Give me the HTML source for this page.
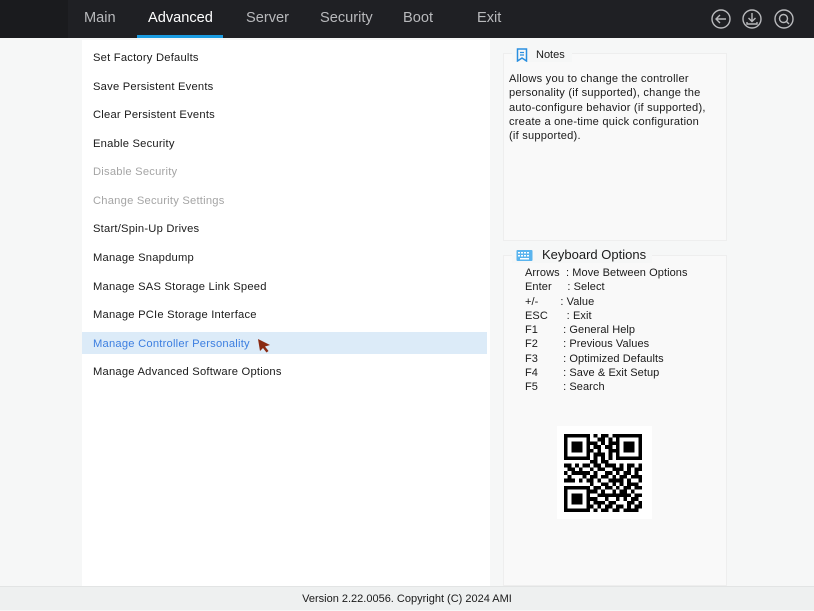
<!DOCTYPE html>
<html><head><meta charset="utf-8"><style>
*{margin:0;padding:0;box-sizing:border-box}
body{width:814px;height:610px;background:#f6f7f7;font-family:"Liberation Sans",sans-serif;position:relative;overflow:hidden;color:#1a1a1a}
.top{position:absolute;left:0;top:0;width:814px;height:38px;background:#1f2024}
.top .l{position:absolute;left:0;top:0;width:68px;height:38px;background:#1a1b1e}
.tab{position:absolute;top:10px;font-size:14.6px;color:#b8b9bc}
.tab.a{color:#fff}
.ul{position:absolute;left:137px;top:35px;width:86px;height:3px;background:#1a9be0}
.main{position:absolute;left:82px;top:40px;width:408px;height:546px;background:#fff}
.it{position:absolute;left:93px;font-size:11.2px;letter-spacing:0.22px;color:#1a1a1a}
.it.d{color:#a5a5a5}
.hl{position:absolute;left:82px;top:332px;width:405px;height:22px;background:#dcebf8}
.panel{position:absolute;left:503px;width:224px;background:#f9f9f9;border:1px solid #eeeeee}
.ph{position:absolute;font-size:11px;color:#1a1a1a}
.nt{position:absolute;left:509px;top:72px;font-size:11.1px;letter-spacing:0.22px;line-height:14.3px;color:#1a1a1a}
.kb{position:absolute;left:525px;top:266px;font-size:11px;letter-spacing:0.08px;line-height:14.3px;color:#1a1a1a}
.foot{position:absolute;left:0;top:586px;width:814px;height:24px;background:#eef0f0;border-top:1px solid #e2e4e4;font-size:11px;text-align:center;line-height:24px}
</style></head><body>
<div class="top"><div class="l"></div>
<div class="tab" style="left:84px">Main</div>
<div class="tab a" style="left:148px">Advanced</div>
<div class="tab" style="left:246px">Server</div>
<div class="tab" style="left:320px">Security</div>
<div class="tab" style="left:403px">Boot</div>
<div class="tab" style="left:477px">Exit</div>
<div class="ul"></div>
<svg style="position:absolute;left:700px;top:0" width="114" height="38" fill="none" stroke="#b8b9bc" stroke-width="1.4">
<circle cx="21" cy="19" r="9"/><path d="M26 19H16M20 15l-4 4 4 4"/>
<circle cx="52" cy="19" r="9"/><path d="M52 13v8M48.5 18l3.5 3.5 3.5-3.5M47 22v2h10v-2"/>
<circle cx="84" cy="19" r="9"/><circle cx="83.5" cy="18.5" r="4"/><path d="M86.5 21.5l2.5 2.5"/>
</svg>
</div>
<div class="main"></div>
<div class="hl"></div>
<div class="it" style="top:52px">Set Factory Defaults</div>
<div class="it" style="top:81px">Save Persistent Events</div>
<div class="it" style="top:109px">Clear Persistent Events</div>
<div class="it" style="top:138px">Enable Security</div>
<div class="it d" style="top:166px">Disable Security</div>
<div class="it d" style="top:195px">Change Security Settings</div>
<div class="it" style="top:223px">Start/Spin-Up Drives</div>
<div class="it" style="top:252px">Manage Snapdump</div>
<div class="it" style="top:281px">Manage SAS Storage Link Speed</div>
<div class="it" style="top:309px">Manage PCIe Storage Interface</div>
<div class="it" style="top:338px;color:#3d7fe0">Manage Controller Personality</div>
<div class="it" style="top:366px">Manage Advanced Software Options</div>
<svg style="position:absolute;left:256px;top:338px" width="16" height="16"><path d="M2 1L14 7 9 8.5 12.5 13 10.5 14.5 7 10 4 13z" fill="#8a2a12"/></svg>

<div class="panel" style="top:53px;height:188px"></div>
<div style="position:absolute;left:512px;top:46px;width:60px;height:16px;background:#f6f7f7"></div>
<svg style="position:absolute;left:516px;top:48px" width="12" height="14"><path d="M1.5 1h9v12l-4.5-3-4.5 3z" fill="none" stroke="#2a8fe0" stroke-width="1.5"/><path d="M4 4.5h4M4 7h4" stroke="#2a8fe0" stroke-width="1.3"/></svg>
<div class="ph" style="left:536px;top:49px">Notes</div>
<div class="nt">Allows you to change the controller<br>personality (if supported), change the<br>auto-configure behavior (if supported),<br>create a one-time quick configuration<br>(if supported).</div>

<div class="panel" style="top:255px;height:331px"></div>
<div style="position:absolute;left:512px;top:246px;width:140px;height:17px;background:#f6f7f7"></div>
<svg style="position:absolute;left:516px;top:249px" width="18" height="14"><rect x="0.5" y="1" width="16" height="11" rx="1" fill="#5ab4ee"/><g fill="#fff"><rect x="2" y="3" width="2" height="1.5"/><rect x="5" y="3" width="2" height="1.5"/><rect x="8" y="3" width="2" height="1.5"/><rect x="11" y="3" width="2" height="1.5"/><rect x="2" y="6" width="2" height="1.5"/><rect x="5" y="6" width="2" height="1.5"/><rect x="8" y="6" width="2" height="1.5"/><rect x="11" y="6" width="2" height="1.5"/><rect x="4" y="9" width="9" height="1.5"/></g></svg>
<div class="ph" style="left:542px;top:247px;font-size:13px">Keyboard Options</div>
<div class="kb">
Arrows&nbsp; : Move Between Options<br>
Enter&nbsp;&nbsp;&nbsp;&nbsp; : Select<br>
+/-&nbsp;&nbsp;&nbsp;&nbsp;&nbsp;&nbsp; : Value<br>
ESC&nbsp;&nbsp;&nbsp;&nbsp;&nbsp; : Exit<br>
F1&nbsp;&nbsp;&nbsp;&nbsp;&nbsp;&nbsp;&nbsp; : General Help<br>
F2&nbsp;&nbsp;&nbsp;&nbsp;&nbsp;&nbsp;&nbsp; : Previous Values<br>
F3&nbsp;&nbsp;&nbsp;&nbsp;&nbsp;&nbsp;&nbsp; : Optimized Defaults<br>
F4&nbsp;&nbsp;&nbsp;&nbsp;&nbsp;&nbsp;&nbsp; : Save &amp; Exit Setup<br>
F5&nbsp;&nbsp;&nbsp;&nbsp;&nbsp;&nbsp;&nbsp; : Search
</div>
<div style="position:absolute;left:557px;top:426px;width:95px;height:93px;background:#fff"></div>
<svg style="position:absolute;left:564px;top:434px" width="78" height="78" viewBox="0 0 21 21" shape-rendering="crispEdges"><path fill="#000" d="
M0 0h7v1h-7zM8 0h1v1h-1zM10 0h2v1h-2zM13 0h8v1h-8z
M0 1h1v1h-1zM6 1h1v1h-1zM9 1h2v1h-2zM12 1h1v1h-1zM14 1h1v1h-1zM20 1h1v1h-1z
M0 2h1v1h-1zM2 2h3v1h-3zM6 2h3v1h-3zM10 2h1v1h-1zM12 2h3v1h-3zM16 2h3v1h-3zM20 2h1v1h-1z
M0 3h1v1h-1zM2 3h3v1h-3zM6 3h1v1h-1zM8 3h2v1h-2zM11 3h2v1h-2zM14 3h1v1h-1zM16 3h3v1h-3zM20 3h1v1h-1z
M0 4h1v1h-1zM2 4h3v1h-3zM6 4h2v1h-2zM9 4h1v1h-1zM12 4h3v1h-3zM16 4h3v1h-3zM20 4h1v1h-1z
M0 5h1v1h-1zM6 5h1v1h-1zM8 5h3v1h-3zM12 5h1v1h-1zM14 5h1v1h-1zM20 5h1v1h-1z
M0 6h7v1h-7zM8 6h1v1h-1zM10 6h1v1h-1zM12 6h1v1h-1zM14 6h7v1h-7z
M7 7h2v1h-2zM10 7h2v1h-2z
M0 8h2v1h-2zM3 8h1v1h-1zM5 8h2v1h-2zM8 8h2v1h-2zM11 8h3v1h-3zM15 8h1v1h-1zM17 8h2v1h-2zM20 8h1v1h-1z
M1 9h2v1h-2zM4 9h1v1h-1zM7 9h1v1h-1zM9 9h2v1h-2zM13 9h3v1h-3zM17 9h1v1h-1zM19 9h2v1h-2z
M0 10h1v1h-1zM2 10h5v1h-5zM8 10h1v1h-1zM11 10h2v1h-2zM14 10h1v1h-1zM16 10h2v1h-2zM19 10h1v1h-1z
M1 11h1v1h-1zM5 11h1v1h-1zM7 11h2v1h-2zM10 11h2v1h-2zM13 11h1v1h-1zM15 11h2v1h-2zM18 11h3v1h-3z
M0 12h3v1h-3zM4 12h1v1h-1zM6 12h2v1h-2zM9 12h1v1h-1zM12 12h4v1h-4zM17 12h1v1h-1zM20 12h1v1h-1z
M7 13h1v1h-1zM10 13h2v1h-2zM13 13h1v1h-1zM15 13h1v1h-1zM17 13h3v1h-3z
M0 14h7v1h-7zM8 14h2v1h-2zM11 14h2v1h-2zM14 14h1v1h-1zM16 14h2v1h-2zM19 14h2v1h-2z
M0 15h1v1h-1zM6 15h3v1h-3zM10 15h1v1h-1zM13 15h1v1h-1zM15 15h2v1h-2zM18 15h1v1h-1z
M0 16h1v1h-1zM2 16h3v1h-3zM6 16h1v1h-1zM9 16h9v1h-9zM19 16h2v1h-2z
M0 17h1v1h-1zM2 17h3v1h-3zM6 17h3v1h-3zM11 17h1v1h-1zM14 17h1v1h-1zM16 17h1v1h-1zM18 17h2v1h-2z
M0 18h1v1h-1zM2 18h3v1h-3zM6 18h1v1h-1zM8 18h3v1h-3zM12 18h2v1h-2zM17 18h2v1h-2zM20 18h1v1h-1z
M0 19h1v1h-1zM6 19h2v1h-2zM9 19h1v1h-1zM11 19h2v1h-2zM14 19h2v1h-2zM17 19h1v1h-1zM19 19h2v1h-2z
M0 20h7v1h-7zM8 20h1v1h-1zM10 20h2v1h-2zM13 20h2v1h-2zM16 20h4v1h-4z"/></svg>

<div class="foot">Version 2.22.0056. Copyright (C) 2024 AMI</div>
</body></html>
